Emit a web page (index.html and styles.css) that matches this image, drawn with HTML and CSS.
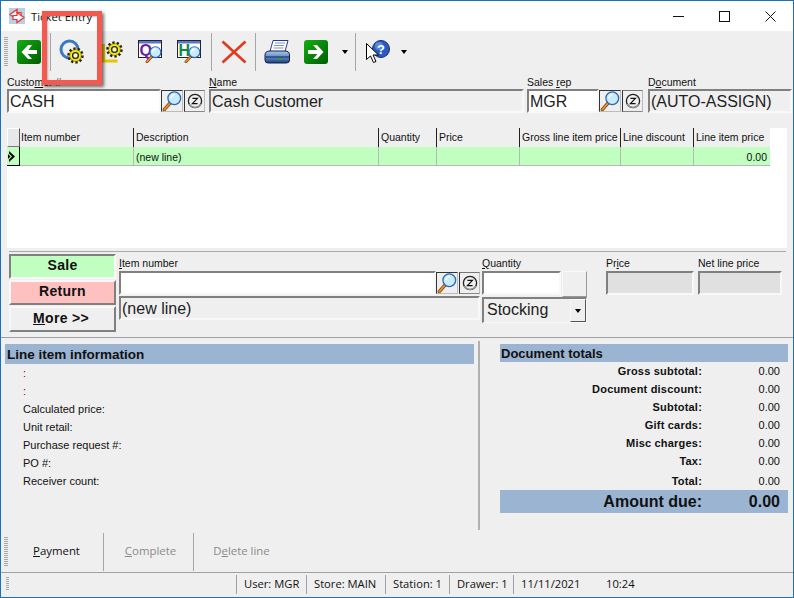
FILE: index.html
```html
<!DOCTYPE html>
<html lang="en">
<head>
<meta charset="utf-8">
<title>Ticket Entry</title>
<link rel="stylesheet" href="styles.css">
</head>
<body>
<svg class="defs" width="0" height="0">
  <defs>
    <linearGradient id="gr" x1="0" y1="0" x2="1" y2="1"><stop offset="0" stop-color="#12b012"/><stop offset="1" stop-color="#005c00"/></linearGradient>
    <linearGradient id="pr" x1="0" y1="0" x2="0" y2="1"><stop offset="0" stop-color="#a8c8ec"/><stop offset=".55" stop-color="#5a86c0"/><stop offset="1" stop-color="#1c3c80"/></linearGradient>
    <symbol id="gear" viewBox="0 0 20 20">
      <circle cx="10" cy="10" r="8" fill="#f0e020" stroke="#222" stroke-width="3.400" stroke-dasharray="2.600 2.400"/>
      <circle cx="10" cy="10" r="6.800" fill="#f6e818" stroke="#6a6000" stroke-width=".6"/>
      <circle cx="10" cy="10" r="3.400" fill="#fffbb0" stroke="#222" stroke-width="1.600"/>
    </symbol>
    <symbol id="lens" viewBox="0 0 22 22">
      <path d="M10 12 2.500 20.500" stroke="#7a3a08" stroke-width="3.600" stroke-linecap="round"/>
      <path d="M10 12 2.500 20.500" stroke="#f09030" stroke-width="2" stroke-linecap="round"/>
      <circle cx="13.500" cy="8" r="7" fill="#c8ecfa" stroke="#2a66b8" stroke-width="1.400"/>
      <path d="M10 8a4 4 0 0 1 4-4" stroke="#fff" stroke-width="1.500" fill="none"/>
    </symbol>
    <symbol id="zed" viewBox="0 0 16 16">
      <circle cx="8" cy="8" r="6.600" fill="#f0f0f0" stroke="#222" stroke-width="1.300"/>
      <path d="M2 11a7 7 0 0 0 12 0" stroke="#999" stroke-width="1.400" fill="none"/>
      <path d="M5.400 5.400h5L5.400 10.600h5.200" stroke="#111" stroke-width="1.200" fill="none"/>
    </symbol>
  </defs>
</svg>
<div class="window">
  <header class="titlebar">
    <svg class="appicon" width="16" height="16" viewBox="0 0 16 16">
      <rect width="16" height="16" fill="#b8cfe4"/>
      <path d="M1 6.500 8 1.500v3h4v4H8v3z" fill="#fff" stroke="#e83030" stroke-width="1.200"/>
      <path d="M15 9.500 8 14.500v-3H4v-4h4v-3z" fill="#fff" stroke="#e83030" stroke-width="1.200"/>
    </svg>
    <span class="title">Ticket Entry</span>
    <div class="winbtns">
      <div class="winbtn"><svg width="11" height="11" viewBox="0 0 11 11"><path d="M0 5.500h11" stroke="#111"/></svg></div>
      <div class="winbtn"><svg width="11" height="11" viewBox="0 0 11 11"><rect x=".5" y=".5" width="10" height="10" fill="none" stroke="#111"/></svg></div>
      <div class="winbtn"><svg width="11" height="11" viewBox="0 0 11 11"><path d="M.5.500l10 10M10.500.500l-10 10" stroke="#111"/></svg></div>
    </div>
  </header>

  <nav class="toolbar">
    <div class="grip"></div>
    <div class="tool"><svg width="24" height="24" viewBox="0 0 24 24"><rect width="24" height="24" rx="3" fill="url(#gr)"/><path d="M11 5 4.500 12l6.500 7h4l-4.500-5H20v-4h-8.500L15 5z" fill="#fff"/></svg></div>
    <div class="sep"></div>
    <div class="tool"><svg width="26" height="26" viewBox="0 0 26 26"><circle cx="10.500" cy="10.500" r="8.500" fill="none" stroke="#3a78c4" stroke-width="3"/><use href="#gear" x="8" y="8" width="17" height="17"/></svg></div>
    <div class="tool"><svg width="22" height="22" viewBox="0 0 22 22"><path d="M1.500 3v17h14" fill="none" stroke="#e8c400" stroke-width="3"/><use href="#gear" x="4" y="0" width="17" height="17"/></svg></div>
    <div class="tool"><svg width="24" height="24" viewBox="0 0 24 24"><rect x=".5" y=".5" width="23" height="17" fill="#fff" stroke="#223"/><rect x="1" y="1" width="22" height="2.500" fill="#5a78c8"/><text x="1.500" y="15.500" class="glyph-q">Q</text><use href="#lens" x="7" y="6" width="17" height="17"/></svg></div>
    <div class="tool"><svg width="24" height="24" viewBox="0 0 24 24"><rect x=".5" y=".5" width="23" height="17" fill="#fff" stroke="#223"/><rect x="1" y="1" width="22" height="2.500" fill="#5a78c8"/><text x="1.500" y="15.500" class="glyph-h">H</text><use href="#lens" x="7" y="6" width="17" height="17"/></svg></div>
    <div class="sep"></div>
    <div class="tool"><svg width="26" height="24" viewBox="0 0 26 24"><path d="M1.500 1.500 24.500 22.500M24.500 1.500 1.500 22.500" stroke="#e23a1c" stroke-width="2.600"/></svg></div>
    <div class="sep"></div>
    <div class="tool"><svg width="26" height="24" viewBox="0 0 26 24"><path d="M9 .5h15l-3 11H6z" fill="#fff" stroke="#2a3a90"/><path d="M11 3h10M10 5.500h10M9.500 8h10" stroke="#7a94cc"/><path d="M1 15q0-4 5-4h15q4.500 0 4.500 4v5q0 3-3 3H4q-3 0-3-3z" fill="url(#pr)" stroke="#10204c"/><path d="M1.500 17h24" stroke="#10204c"/><rect x="14" y="18.500" width="4" height="1.500" fill="#2aa030"/></svg></div>
    <div class="tool"><svg width="24" height="24" viewBox="0 0 24 24"><rect width="24" height="24" rx="3" fill="url(#gr)"/><path d="M13 5 19.500 12 13 19H9l4.500-5H4v-4h9.500L9 5z" fill="#fff"/></svg></div>
    <div class="tool"><span class="caret"></span></div>
    <div class="sep"></div>
    <div class="tool"><svg width="24" height="24" viewBox="0 0 24 24"><circle cx="15" cy="9" r="8.500" fill="#2a5cc0" stroke="#10307c"/><circle cx="13" cy="6" r="4" fill="#5a88dc"/><text x="11" y="14" class="glyph-help">?</text><path d="M.5 3.500v16l4-3.500 3 6.500 2.500-1-3-6.500h5.500z" fill="#fff" stroke="#000"/></svg></div>
    <div class="tool"><span class="caret"></span></div>
  </nav>

  <section class="fields">
    <div class="field f-cust">
      <label class="lbl">Custo<u>m</u>er #</label>
      <div class="combo">
        <div class="input white">CASH</div>
        <div class="ibtn"><svg width="20" height="20"><use href="#lens" width="20" height="20"/></svg></div>
        <div class="ibtn"><svg width="16" height="16"><use href="#zed" width="16" height="16"/></svg></div>
      </div>
    </div>
    <div class="field f-name">
      <label class="lbl"><u>N</u>ame</label>
      <div class="combo"><div class="input">Cash Customer</div></div>
    </div>
    <div class="field f-rep">
      <label class="lbl">Sales <u>r</u>ep</label>
      <div class="combo">
        <div class="input white">MGR</div>
        <div class="ibtn"><svg width="20" height="20"><use href="#lens" width="20" height="20"/></svg></div>
        <div class="ibtn"><svg width="16" height="16"><use href="#zed" width="16" height="16"/></svg></div>
      </div>
    </div>
    <div class="field f-doc">
      <label class="lbl">D<u>o</u>cument</label>
      <div class="combo"><div class="input">(AUTO-ASSIGN)</div></div>
    </div>
  </section>

  <section class="grid">
    <div class="grow ghead">
      <div class="gcorner"></div>
      <div class="gh">Item number</div>
      <div class="gh">Description</div>
      <div class="gh">Quantity</div>
      <div class="gh">Price</div>
      <div class="gh">Gross line item price</div>
      <div class="gh">Line discount</div>
      <div class="gh">Line item price</div>
    </div>
    <div class="grow gline">
      <div class="gmark"><svg width="9" height="11" viewBox="0 0 9 11"><path d="M1 0l6 5.500L1 11V8.500L4 5.500 1 2.500z" fill="#000"/><path d="M0 3l2.500 2.500L0 8z" fill="#000"/></svg></div>
      <div class="gc"></div>
      <div class="gc">(new line)</div>
      <div class="gc"></div>
      <div class="gc"></div>
      <div class="gc"></div>
      <div class="gc"></div>
      <div class="gc right">0.00</div>
    </div>
  </section>

  <section class="entry">
    <div class="modes">
      <div class="mode sale">Sale</div>
      <div class="mode ret">Return</div>
      <div class="mode more"><u>M</u>ore &gt;&gt;</div>
    </div>
    <div class="e-item">
      <label class="lbl"><u>I</u>tem number</label>
      <div class="combo e-h1">
        <div class="input white"></div>
        <div class="ibtn"><svg width="20" height="20"><use href="#lens" width="20" height="20"/></svg></div>
        <div class="ibtn"><svg width="16" height="16"><use href="#zed" width="16" height="16"/></svg></div>
      </div>
      <div class="input e-desc">(new line)</div>
    </div>
    <div class="e-qty">
      <label class="lbl"><u>Q</u>uantity</label>
      <div class="combo e-qrow">
        <div class="input white"></div>
        <div class="qbtn"></div>
      </div>
      <div class="input e-sel"><span class="seltext">Stocking</span><span class="selbtn"><span class="caret"></span></span></div>
    </div>
    <div class="e-price">
      <label class="lbl">Pr<u>i</u>ce</label>
      <div class="input gray"></div>
    </div>
    <div class="e-net">
      <label class="lbl">Net line price</label>
      <div class="input gray"></div>
    </div>
  </section>

  <section class="details">
    <div class="info">
      <h2 class="bar infobar">Line item information</h2>
      <div class="irow"><span class="colon">:</span></div>
      <div class="irow"><span class="colon">:</span></div>
      <div class="irow">Calculated price:</div>
      <div class="irow">Unit retail:</div>
      <div class="irow">Purchase request #:</div>
      <div class="irow">PO #:</div>
      <div class="irow">Receiver count:</div>
    </div>
    <div class="vline"></div>
    <div class="totals">
      <h2 class="bar totbar">Document totals</h2>
      <div class="trow"><b>Gross subtotal:</b><span>0.00</span></div>
      <div class="trow"><b>Document discount:</b><span>0.00</span></div>
      <div class="trow"><b>Subtotal:</b><span>0.00</span></div>
      <div class="trow"><b>Gift cards:</b><span>0.00</span></div>
      <div class="trow"><b>Misc charges:</b><span>0.00</span></div>
      <div class="trow"><b>Tax:</b><span>0.00</span></div>
      <div class="trow ttotal"><b>Total:</b><span>0.00</span></div>
      <div class="trow due"><b>Amount due:</b><b>0.00</b></div>
    </div>
  </section>

  <footer class="actions">
    <div class="grip"></div>
    <div class="act"><u>P</u>ayment</div>
    <div class="sep"></div>
    <div class="act off"><u>C</u>omplete</div>
    <div class="sep"></div>
    <div class="act off">D<u>e</u>lete line</div>
  </footer>

  <footer class="status">
    <div class="stgrip"><div class="grip"></div></div>
    <div class="st s1">User: MGR</div>
    <div class="st s2">Store: MAIN</div>
    <div class="st s3">Station: 1</div>
    <div class="st s3">Drawer: 1</div>
    <div class="st s4">11/11/2021</div>
    <div class="st s5">10:24</div>
  </footer>

  <div class="highlight"></div>
</div>
</body>
</html>
```
FILE: styles.css
```css
* { box-sizing: border-box; }
html, body { margin: 0; padding: 0; }
body { width: 794px; height: 598px; overflow: hidden; background: #efefef; font-family: "Liberation Sans", Arial, sans-serif; }
.defs { position: absolute; }
svg { display: block; }
u { text-decoration: underline; text-underline-offset: 1px; }

.window { position: relative; width: 794px; height: 598px; border: 1px solid #1a72b8; background: #efefef; display: flex; flex-direction: column; color: #000; }

.titlebar { height: 30px; background: #fff; display: flex; align-items: center; padding-left: 8px; flex: none; }
.appicon { margin-right: 6px; }
.title { font: 11.3px "Open Sans", sans-serif; color: #111; }
.winbtns { margin-left: auto; display: flex; }
.winbtn { width: 46px; height: 30px; display: flex; align-items: center; justify-content: center; }

.toolbar { height: 41px; flex: none; display: grid; grid-template-columns: 4px 42px 1px 42px 40px 34px 44px 1px 43px 1px 42px 36px 21px 1px 44px 7px; padding: 2px 0 1px 3px; }
.tool { display: flex; align-items: center; justify-content: center; }
.sep { background: #a6a6a6; }
.grip { width: 4px; background: repeating-linear-gradient(to bottom, #a8a8a8 0 1px, transparent 1px 2px); margin: 4px 0; }
.caret { width: 0; height: 0; border-left: 3.5px solid transparent; border-right: 3.5px solid transparent; border-top: 4px solid #000; }
.glyph-q { font: bold 16px "Liberation Sans", sans-serif; fill: #6a1fa0; }
.glyph-h { font: bold 16px "Liberation Sans", sans-serif; fill: #0f8a3c; }
.glyph-help { font: bold 13px "Liberation Sans", sans-serif; fill: #fff; }

.lbl { display: block; height: 13px; font-size: 10.5px; line-height: 13px; color: #111; white-space: nowrap; }

.fields { display: flex; padding: 4px 0 0 6px; height: 56px; flex: none; }
.field { display: flex; flex-direction: column; }
.f-cust { width: 198px; margin-right: 4px; }
.f-name { width: 315px; margin-right: 3px; }
.f-rep { width: 116px; margin-right: 5px; }
.f-doc { width: 144px; }
.combo { display: flex; height: 24px; flex: none; }
.input { flex: 1; min-width: 0; height: 24px; border: 2px solid; border-color: #808080 #f8f8f8 #f8f8f8 #808080; background: #efefef; font-size: 16px; line-height: 22px; padding-left: 1px; color: #222; white-space: nowrap; overflow: hidden; }
.input.white { background: #fff; }
.input.gray { background: #e0e0e0; flex: none; }
.ibtn { width: 22px; flex: none; margin: 1px 0; height: 22px; background: #efefef; border: 1px solid; border-color: #333 #bbb #bbb #333; display: flex; align-items: center; justify-content: center; }
.ibtn + .ibtn { width: 21px; margin-left: 1px; border-color: #777 #bbb #888 #333; }

.grid { height: 120px; margin-left: 6px; width: 780px; background: #fff; flex: none; }
.grow { display: grid; grid-template-columns: 13px 113px 245px 58px 83px 101px 73px 77px; width: 763px; }
.ghead { height: 19px; background: #efefef; }
.gcorner { background: #e8e8e8; border: 1px solid; border-color: #fff #555 #777 #fff; }
.gh { font-size: 10.5px; line-height: 18px; padding-left: 2px; border-left: 1px solid #222; white-space: nowrap; overflow: hidden; color: #111; }
.gh:nth-child(2) { padding-left: 1px; border-left: 0; }
.gline { height: 19px; grid-template-rows: 19px; background: #c0ffc0; }
.gmark { border: 0 solid #000; border-right-width: 1px; border-bottom-width: 1px; background: #c0ffc0; display: flex; align-items: center; padding-left: 1px; }
.gc { font-size: 10.5px; line-height: 20px; padding: 0 3px 0 2px; border-left: 1px solid #b8b8b8; border-bottom: 1px solid #b8b8b8; color: #111; overflow: hidden; }
.gmark + .gc { border-left: 0; }
.gc.right { text-align: right; }

.entry { height: 86px; flex: none; margin: 3px 9px 0 8px; width: 777px; border-top: 1px solid #a8a8a8; display: flex; position: relative; }
.entry .lbl { height: 14px; }
.modes { width: 107px; margin-top: 2px; flex: none; display: flex; flex-direction: column; }
.mode { text-align: center; font-weight: 700; font-size: 14px; letter-spacing: .3px; color: #111; border: 2px solid; }
.sale { height: 25px; line-height: 18px; background: #c0ffc0; border-color: #808080 #f8f8f8 #f8f8f8 #808080; }
.ret { height: 25px; line-height: 19px; margin-top: 1px; background: #ffc0c0; border-color: #f8f8f8 #808080 #808080 #f8f8f8; }
.more { height: 26px; line-height: 21px; margin-top: 1px; padding-right: 3px; background: #efefef; border-color: #f8f8f8 #808080 #808080 #f8f8f8; }
.e-item { width: 361px; margin-left: 3px; padding-top: 5px; flex: none; }
.e-h1 { height: 24px; }
.e-desc { height: 24px; margin-top: 1px; flex: none; }
.e-item .input { display: block; }
.e-h1 .input { flex: 1; }
.e-qty { width: 105px; margin-left: 2px; padding-top: 5px; flex: none; }
.e-qrow { height: 24px; }
.qbtn { width: 25px; height: 26px; margin-left: 1px; background: #efefef; border: 1px solid; border-color: #f8f8f8 #999 #999 #f8f8f8; flex: none; }
.e-sel { display: flex; height: 26px; margin-top: 2px; border-right-width: 1px; border-bottom-width: 1px; line-height: 22px; }
.seltext { flex: 1; padding-left: 2px; }
.selbtn { width: 16px; background: #efefef; border: 1px solid; border-color: #f8f8f8 #555 #555 #f8f8f8; display: flex; align-items: center; justify-content: center; }
.e-price { width: 88px; margin-left: 19px; padding-top: 5px; flex: none; }
.e-net { width: 84px; margin-left: 4px; padding-top: 5px; flex: none; }
.e-price .input, .e-net .input { width: 100%; }

.details { height: 195px; flex: none; border-top: 1px solid #a0a0a0; display: flex; padding: 6px 0 0 4px; }
.info { width: 469px; flex: none; }
.bar { margin: 0; background: #9ab4d2; font-size: 13px; font-weight: 700; padding-left: 2px; color: #111; white-space: nowrap; }
.infobar { height: 20px; line-height: 21px; font-size: 13.5px; }
.irow { height: 18px; line-height: 18px; font-size: 11px; padding-left: 18px; color: #111; }
.colon { color: #800000; }
.vline { width: 2px; margin: -3px 0 2px 4px; background: #b0b0b0; flex: none; }
.totals { width: 288px; margin-left: 20px; flex: none; }
.totbar { height: 18px; line-height: 19px; padding-left: 1px; }
.trow { height: 18px; display: grid; grid-template-columns: 202px 78px; font-size: 11px; line-height: 18px; color: #111; }
.trow b { text-align: right; letter-spacing: .2px; }
.trow span { text-align: right; }
.ttotal { margin-top: 2px; }
.due { height: 23px; background: #9ab4d2; font-size: 16px; line-height: 23px; }
.due b { letter-spacing: 0; }

.actions { height: 40px; flex: none; display: grid; grid-template-columns: 4px 95px 1px 89px 1px 91px; padding: 1px 0 1px 3px; }
.act { font: 11.4px/35px "Open Sans", sans-serif; text-align: center; padding-left: 2px; color: #111; }
.act.off { color: #8a8a8a; padding-left: 4px; }

.status { flex: 1; border-top: 1px solid #a0a0a0; display: flex; font: 11.2px/20px "Open Sans", sans-serif; color: #111; padding-bottom: 1px; }
.stgrip { width: 235px; flex: none; padding-left: 5px; }
.stgrip .grip { width: 3px; height: 14px; margin: 4px 0; }
.st { flex: none; padding-left: 7px; border-left: 1px solid #a0a0a0; white-space: nowrap; margin: 2px 0; line-height: 18px; }
.s1 { width: 70px; }
.s2 { width: 79px; }
.s3 { width: 64px; }
.s4 { width: 85px; }
.s5 { border-left: 0; padding-left: 8px; }

.highlight { position: absolute; left: 41px; top: 10px; width: 60px; height: 74px; border: 5px solid #f4584f; box-shadow: 2px 2px 3px rgba(0,0,0,.55), inset 1px 1px 2px rgba(0,0,0,.25); }
```
